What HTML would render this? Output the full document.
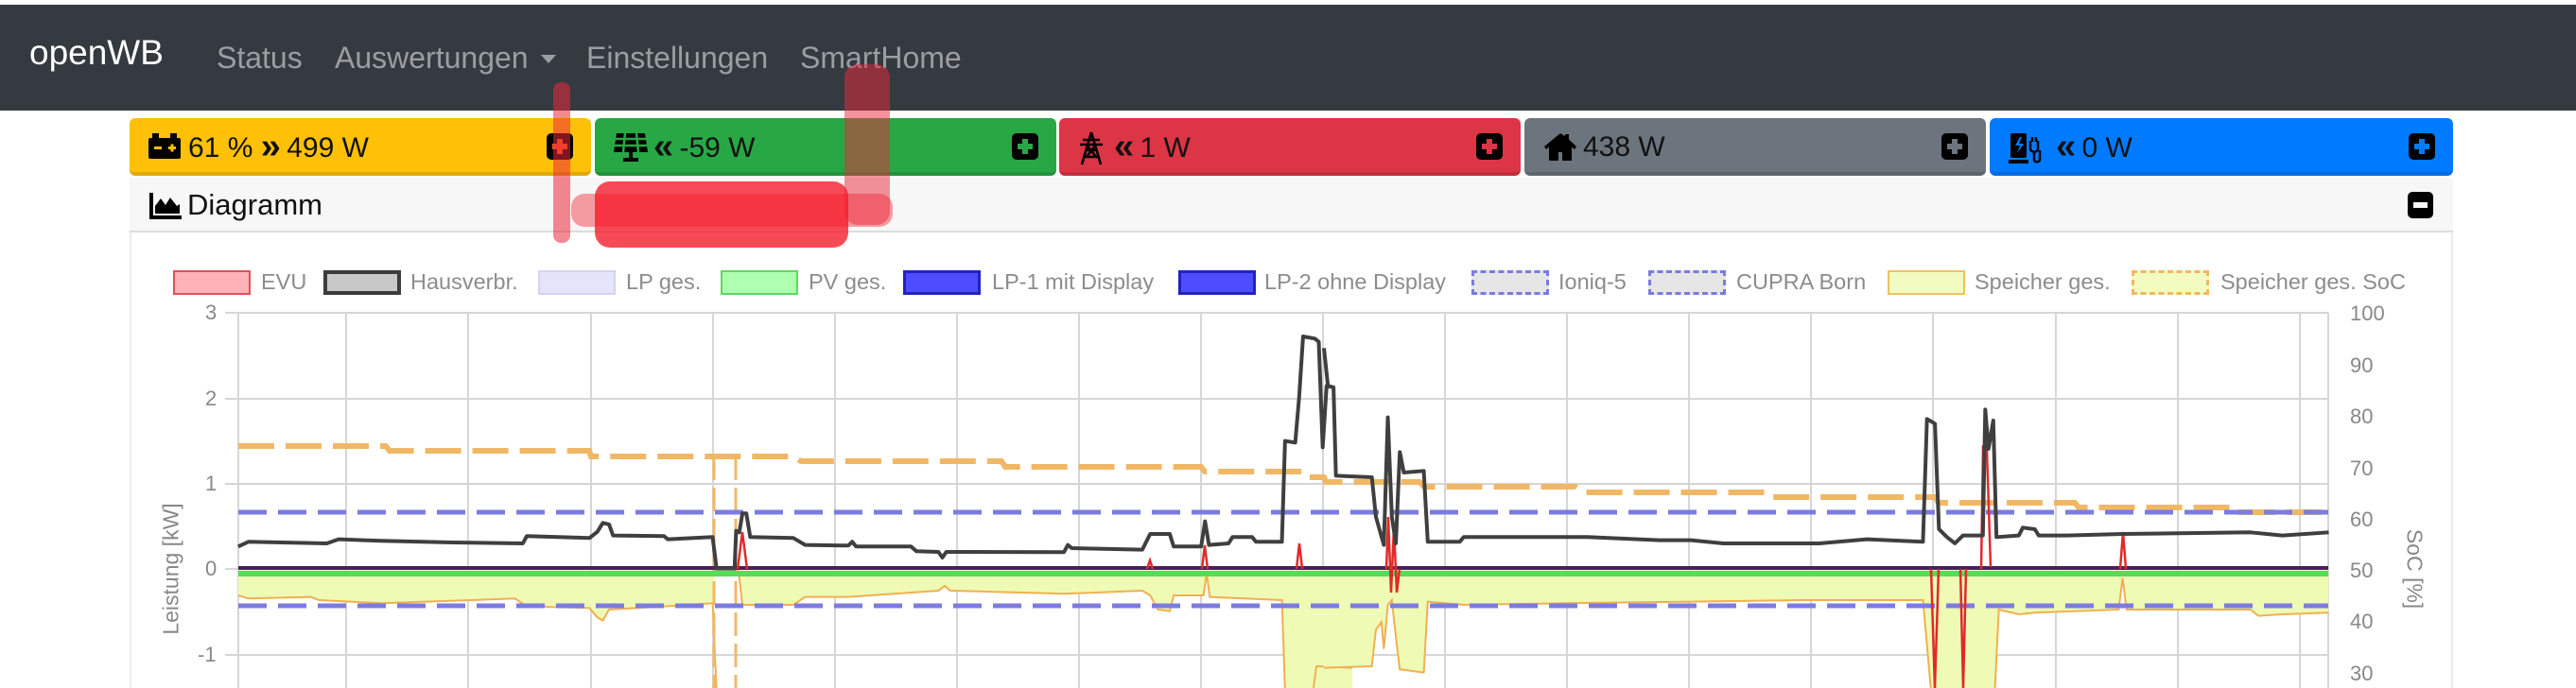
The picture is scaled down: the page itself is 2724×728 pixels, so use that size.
<!DOCTYPE html>
<html><head><meta charset="utf-8">
<style>
*{margin:0;padding:0;box-sizing:border-box}
body{width:2724px;height:728px;overflow:hidden;background:#fff;font-family:"Liberation Sans",sans-serif;position:relative}
.nav{position:absolute;left:0;top:5px;width:2724px;height:112px;background:#343a40}
.brand{position:absolute;left:31px;top:30px;font-size:37px;color:#fff}
.nl{position:absolute;top:38px;font-size:32px;color:#9b9ea1}
.box{position:absolute;top:125px;height:61px;border-radius:6px;border-bottom:4px solid rgba(0,0,0,.12)}
.bt{position:absolute;left:62px;top:14px;font-size:30px;color:#111;white-space:nowrap}
.bt b{font-size:38px;line-height:30px;letter-spacing:-2px;position:relative;top:1px}
.pl{position:absolute;right:19px;top:16px;width:28px;height:28px;background:#000;border-radius:5px}
.pl i{position:absolute;left:11px;top:6px;width:6px;height:16px}
.pl b{position:absolute;left:6px;top:11px;width:16px;height:6px}
.ic{position:absolute;left:20px;top:14px}
.hdr{position:absolute;left:137px;top:188px;width:2457px;height:58px;background:#f7f7f7;border-bottom:2px solid #dcdcdc}
.card{position:absolute;left:137px;top:246px;width:2457px;height:482px;border-left:2px solid #ececec;border-right:2px solid #ececec}
.lg{position:absolute;top:286px;width:82px;height:26px}
.lt{position:absolute;top:285px;font-size:23.5px;color:#8c8c8c;white-space:nowrap}
.tk{position:absolute;font-size:22px;color:#888}
</style></head><body>
<div class="nav">
<div class="brand">openWB</div>
<div class="nl" style="left:229px">Status</div>
<div class="nl" style="left:354px">Auswertungen</div>
<div style="position:absolute;left:572px;top:53px;width:0;height:0;border-left:8px solid transparent;border-right:8px solid transparent;border-top:9px solid #9b9ea1"></div>
<div class="nl" style="left:620px">Einstellungen</div>
<div class="nl" style="left:846px">SmartHome</div>
</div>

<div class="box" style="left:137px;width:488px;background:#ffc107">
<svg class="ic" width="34" height="30" viewBox="0 0 34 30"><rect x="0" y="7" width="34" height="22" rx="2"/><rect x="4" y="2" width="7" height="6"/><rect x="23" y="2" width="7" height="6"/><rect x="6" y="16" width="8" height="3" fill="#ffc107"/><rect x="21" y="16" width="8" height="3" fill="#ffc107"/><rect x="23.5" y="13.5" width="3" height="8" fill="#ffc107"/></svg>
<div class="bt">61 % <b>»</b> 499 W</div>
<div class="pl"><i style="background:#f55a20"></i><b style="background:#f55a20"></b></div></div>
<div class="box" style="left:629px;width:488px;background:#28a745">
<svg class="ic" width="36" height="34" viewBox="0 0 36 34"><path d="M3 2h30l3 20H0z" fill="#000"/><path d="M12 2l-2 20M24 2l2 20M1.5 8h33M1 15h34" stroke="#28a745" stroke-width="2.5"/><rect x="16" y="22" width="4" height="7"/><rect x="10" y="28" width="16" height="4"/></svg>
<div class="bt"><b>«</b> -59 W</div>
<div class="pl"><i style="background:#28a745"></i><b style="background:#28a745"></b></div></div>
<div class="box" style="left:1120px;width:488px;background:#dc3545">
<svg class="ic" width="28" height="36" viewBox="0 0 28 36"><path d="M14 1L4 35M14 1l10 34M5 9h18M2 14h24M8 20h12M6 27h16M9 14l10 13M19 14L9 27" stroke="#000" stroke-width="2.6" fill="none"/></svg>
<div class="bt" style="left:58px"><b>«</b> 1 W</div>
<div class="pl"><i style="background:#dc3545"></i><b style="background:#dc3545"></b></div></div>
<div class="box" style="left:1612px;width:488px;background:#6c757d">
<svg class="ic" width="36" height="32" viewBox="0 0 36 32"><path d="M18 2L1 16l2 3 3-2.4V31h10v-9h4v9h10V16.6l3 2.4 2-3L27 8.5V3h-4v2.3z"/></svg>
<div class="bt">438 W</div>
<div class="pl"><i style="background:#6c757d"></i><b style="background:#6c757d"></b></div></div>
<div class="box" style="left:2104px;width:490px;background:#007bff">
<svg class="ic" width="40" height="36" viewBox="0 0 40 36"><rect x="2" y="2" width="17" height="26" rx="2"/><rect x="0" y="30" width="21" height="4"/><path d="M12 6l-5 9h5l-3 8 7-10h-5l3-7z" fill="#007bff"/><path d="M23 10v8c0 5 8 5 8 0v-8M25 6v5M29 6v5M27 22v8c0 3 6 3 6 0V20" stroke="#000" stroke-width="2.5" fill="none"/></svg>
<div class="bt" style="left:70px"><b>«</b> 0 W</div>
<div class="pl"><i style="background:#007bff"></i><b style="background:#007bff"></b></div></div>

<div class="hdr">
<svg style="position:absolute;left:21px;top:16px" width="34" height="28" viewBox="0 0 34 28"><path d="M0 0h4v24h30v4H0z"/><path d="M6 22V14l6-8 5 7 5-8 7 9 3-2v10z"/></svg>
<div style="position:absolute;left:61px;top:11px;font-size:31px;color:#111">Diagramm</div>
<div style="position:absolute;left:2409px;top:15px;width:27px;height:28px;background:#000;border-radius:5px"><div style="position:absolute;left:6px;top:11px;width:15px;height:6px;background:#f7f7f7"></div></div>
</div>
<div class="card"></div>

<div class="lg" style="left:183px;background:#ffb3b8;border:2px solid #e0505a"></div><div class="lt" style="left:276px">EVU</div>
<div class="lg" style="left:342px;background:#c8c8c8;border:4px solid #3c3c3c"></div><div class="lt" style="left:434px">Hausverbr.</div>
<div class="lg" style="left:569px;background:#e4e4fa;border:2px solid #d4d4f0"></div><div class="lt" style="left:662px">LP ges.</div>
<div class="lg" style="left:762px;background:#b0ffb0;border:2px solid #60d860"></div><div class="lt" style="left:855px">PV ges.</div>
<div class="lg" style="left:955px;background:#4d4dff;border:3px solid #2222c0"></div><div class="lt" style="left:1049px">LP-1 mit Display</div>
<div class="lg" style="left:1246px;background:#4d4dff;border:3px solid #2222c0"></div><div class="lt" style="left:1337px">LP-2 ohne Display</div>
<div class="lg" style="left:1556px;background:#e6e6e6;border:3px dashed #7b7be0"></div><div class="lt" style="left:1648px">Ioniq-5</div>
<div class="lg" style="left:1743px;background:#e6e6e6;border:3px dashed #7b7be0"></div><div class="lt" style="left:1836px">CUPRA Born</div>
<div class="lg" style="left:1996px;background:#f3fcc0;border:2px solid #f0c060"></div><div class="lt" style="left:2088px">Speicher ges.</div>
<div class="lg" style="left:2254px;background:#f3fcc0;border:3px dashed #f0b860"></div><div class="lt" style="left:2348px">Speicher ges. SoC</div>

<div class="tk" style="left:217px;top:318px">3</div>
<div class="tk" style="left:217px;top:409px">2</div>
<div class="tk" style="left:217px;top:499px">1</div>
<div class="tk" style="left:217px;top:589px">0</div>
<div class="tk" style="left:209px;top:680px">-1</div>
<div class="tk" style="left:2485px;top:319px">100</div>
<div class="tk" style="left:2485px;top:374px">90</div>
<div class="tk" style="left:2485px;top:428px">80</div>
<div class="tk" style="left:2485px;top:483px">70</div>
<div class="tk" style="left:2485px;top:537px">60</div>
<div class="tk" style="left:2485px;top:591px">50</div>
<div class="tk" style="left:2485px;top:645px">40</div>
<div class="tk" style="left:2485px;top:700px">30</div>
<div class="tk" style="left:181px;top:602px;font-size:23px;transform:translate(-50%,-50%) rotate(-90deg);white-space:nowrap;position:absolute">Leistung [kW]</div>
<div class="tk" style="left:2553px;top:602px;font-size:23px;transform:translate(-50%,-50%) rotate(90deg);white-space:nowrap;position:absolute">SoC [%]</div>

<svg style="position:absolute;left:0;top:0" width="2724" height="728">
<g stroke="#d6d6d6" stroke-width="2">
<path d="M238 331H2462M238 422H2462M238 512H2462M238 602H2462M238 693H2462"/>
<path d="M252 331V728M366 331V728M495 331V728M625 331V728M754 331V728M883 331V728M1012 331V728M1141 331V728M1270 331V728M1399 331V728M1528 331V728M1657 331V728M1786 331V728M1915 331V728M2044 331V728M2174 331V728M2303 331V728M2432 331V728M2462 331V728"/>
</g>
<g transform="translate(130,320) scale(0.8292,0.3333)">
<polygon fill="#effab5" points="147,850 147,930 160,940 240,935 250,945 330,955 500,940 515,965 595,970 605,1000 612,1010 620,975 690,965 752,955 755,850 785,850 790,960 855,960 870,935 925,935 1040,915 1048,900 1055,915 1200,925 1300,915 1310,930 1320,975 1335,980 1340,930 1378,930 1382,860 1386,935 1478,945 1482,1230 1568,1230 1568,850"/>
<polyline fill="none" stroke="#f0b050" stroke-width="2" vector-effect="non-scaling-stroke" points="147,930 160,940 240,935 250,945 330,955 500,940 515,965 595,970 605,1000 612,1010 620,975 690,965 752,955 757,1230"/>
<polyline fill="none" stroke="#f0b050" stroke-width="2" vector-effect="non-scaling-stroke" points="785,850 790,960 855,960 870,935 925,935 1040,915 1048,900 1055,915 1200,925 1300,915 1310,930 1320,975 1335,980 1340,930 1378,930 1382,860 1386,935 1478,945 1482,1230"/>
<polyline fill="none" stroke="#f0b050" stroke-width="2" vector-effect="non-scaling-stroke" points="1518,1230 1522,1155 1568,1160"/>
</g>
<g transform="translate(1400,320) scale(0.8446,0.3333)">
<polygon fill="#effab5" points="0,850 0,1160 60,1155 65,1040 72,1015 75,1100 80,960 85,945 90,1060 95,1165 125,1175 130,950 175,960 300,955 460,950 600,945 750,945 760,1230 840,1230 845,975 870,990 890,985 995,975 1000,875 1005,975 1160,975 1170,995 1200,990 1258,985 1258,850"/>
<polyline fill="none" stroke="#f0b050" stroke-width="2" vector-effect="non-scaling-stroke" points="0,1160 60,1155 65,1040 72,1015 75,1100 80,960 85,945 90,1060 95,1165 125,1175 130,950 175,960 300,955 460,950 600,945 750,945 760,1230"/>
<polyline fill="none" stroke="#f0b050" stroke-width="2" vector-effect="non-scaling-stroke" points="840,1230 845,975 870,990 890,985 995,975 1000,875 1005,975 1160,975 1170,995 1200,990 1258,985"/>
</g>
<path d="M252 472H408L412 477H623L625 483H839L847 488H1059L1063 494H1270L1274 499H1378L1382 505H1400L1402 510H1501L1506 515H1666L1674 521H1869L1873 526H2046L2050 532H2194L2198 537H2363L2367 542H2462" fill="none" stroke="#f0b866" stroke-width="6" stroke-dasharray="38 12"/>
<path d="M755 483V728M778 483V728" stroke="#f0b866" stroke-width="3" stroke-dasharray="25 8"/>
<path d="M252 542H2462M252 641H2462" stroke="#7b7be0" stroke-width="5" stroke-dasharray="30 12"/>
<path d="M252 607H2462" stroke="#55dd55" stroke-width="6"/>
<path d="M252 601H2462" stroke="#4a1f5c" stroke-width="4"/>
<g stroke="#e02a2a" stroke-width="2.5" fill="none">
<path d="M780 602L785 563L790 602M1213 602L1216 593L1219 602M1271 602L1274 577L1277 602M1371 602L1374 575L1377 602M1466 602L1468 547L1471 627L1474 558L1477 627L1480 602M2042 602L2046 728L2050 602M2073 602L2076 728L2079 602M2095 602L2097 473L2101 475L2105 600M2242 602L2245 563L2248 602"/>
</g>
<g transform="translate(130,320) scale(0.8292,0.3333)">
<polyline fill="none" stroke="#3f3f3f" stroke-width="4" vector-effect="non-scaling-stroke" stroke-linejoin="round" points="147,775 160,760 260,765 275,752 330,757 420,762 510,765 515,742 595,748 605,728 612,700 620,705 625,740 690,742 695,752 752,745 757,845 780,845 782,725 786,730 790,670 795,670 800,745 855,748 870,770 925,772 930,760 935,775 1005,775 1012,790 1040,792 1045,810 1050,792 1200,793 1205,770 1210,780 1300,785 1310,735 1335,735 1340,775 1375,775 1380,695 1385,770 1410,765 1415,745 1440,745 1445,760 1478,760 1482,440 1495,445 1500,300 1505,108 1520,115 1525,125 1530,460 1535,265 1545,270"/>
</g>
<g transform="translate(1400,320) scale(0.8446,0.3333)">
<polyline fill="none" stroke="#3f3f3f" stroke-width="4" vector-effect="non-scaling-stroke" stroke-linejoin="round" points="0,145 5,265 12,270 15,550 60,555 65,680 75,770 80,365 85,680 90,765 95,475 100,540 125,535 130,760 170,760 175,745 300,745 330,745 420,755 460,755 500,765 620,765 680,752 750,760 755,370 765,385 770,720 780,745 790,765 800,740 825,740 828,340 832,465 838,375 842,745 870,740 875,715 890,720 895,740 930,740 1000,735 1160,730 1200,740 1258,730"/>
</g>
<g>
<rect x="585" y="87" width="18" height="170" rx="8" fill="rgba(235,40,60,0.55)"/>
<rect x="893" y="68" width="48" height="170" rx="14" fill="rgba(235,40,60,0.5)"/>
<rect x="604" y="205" width="340" height="35" rx="14" fill="rgba(240,40,55,0.45)"/>
<rect x="629" y="192" width="268" height="70" rx="16" fill="rgba(245,25,40,0.78)"/>
</g>
</svg>
</body></html>
